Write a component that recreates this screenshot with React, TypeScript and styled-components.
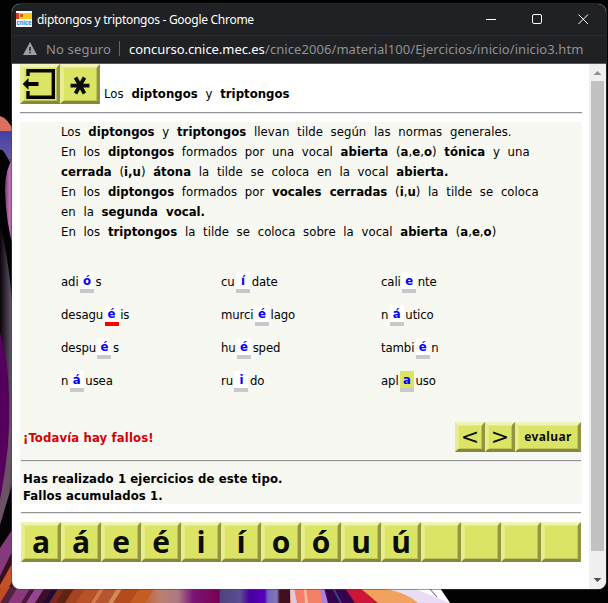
import React from 'react';
import styled, { createGlobalStyle } from 'styled-components';

const GlobalStyle = createGlobalStyle`
  * { box-sizing: border-box; }
  body { margin: 0; background: #000; overflow: hidden; }
`;

const pageFont = '"DejaVu Sans Condensed", "DejaVu Sans", Tahoma, sans-serif';
const chromeFont = '"Noto Sans", "Segoe UI", sans-serif';

const Desktop = styled.div`
  display: grid;
  width: 608px;
  height: 603px;
  overflow: hidden;
  background: #020203;
  > * { grid-area: 1 / 1; }
`;

const Wallpaper = styled.svg`
  display: block;
  width: 608px;
  height: 603px;
`;

const Window = styled.main`
  z-index: 1;
  display: flex;
  flex-direction: column;
  width: 594px;
  height: 585px;
  margin: 4px 0 0 12px;
  border-radius: 8px;
  overflow: hidden;
  background: #fff;
  box-shadow: 0 0 0 1px rgba(70, 70, 70, 0.55);
`;

const TitleBar = styled.header`
  display: flex;
  align-items: center;
  height: 32px;
  padding-left: 4px;
  background: #202124;
  border-bottom: 1px solid #2b2c2f;
  color: #fff;
  font: 12px ${chromeFont};
`;

const Favicon = styled.svg`
  width: 16px;
  height: 16px;
  margin: 0 5px 1px 0;
  overflow: visible;
`;

const WindowTitle = styled.span`
  flex: 1;
  letter-spacing: -0.28px;
  white-space: nowrap;
`;

const WindowControls = styled.svg`
  width: 104px;
  height: 12px;
  margin: 0 16px 1px 0;
`;

const AddressBar = styled.div`
  display: flex;
  align-items: center;
  height: 28px;
  padding: 0 0 2px 11px;
  background: #202124;
  border-bottom: 1px solid #55585c;
  color: #8e9195;
  font: 13px ${chromeFont};
  white-space: nowrap;
`;

const WarningIcon = styled.svg`
  width: 14px;
  height: 13px;
  margin-right: 9px;
`;

const Security = styled.span`
  width: 73px;
  letter-spacing: 0.16px;
`;

const Divider = styled.span`
  width: 1px;
  height: 15px;
  margin-right: 9px;
  background: #65686b;
`;

const Domain = styled.span`
  width: 136px;
  color: #fff;
  letter-spacing: -0.05px;
`;

const UrlPath = styled.span`
  letter-spacing: 0.07px;
`;

const Viewport = styled.div`
  display: flex;
  flex: 1;
  min-height: 0;
`;

const Content = styled.article`
  flex: 1;
  padding: 0 7px 0 8px;
  color: #000;
  font: 13px ${pageFont};
`;

const Heading = styled.div`
  display: flex;
  height: 40px;
  margin-bottom: 8px;
`;

const HeadingText = styled.p`
  margin: 21px 0 0 4px;
  line-height: 18px;
  word-spacing: 4px;
  letter-spacing: 0.03px;
  white-space: nowrap;
`;

const Rule = styled.hr<{ $inset?: boolean }>`
  height: 2px;
  margin: 0 ${p => (p.$inset ? 1 : 0)}px;
  border: 0;
  border-top: 1px solid #929297;
  border-bottom: 1px solid #e8e8e8;
`;

const Panel = styled.section`
  height: 382px;
  margin: 8px 0;
  background: #f7f8f2;
`;

const Rules = styled.div`
  padding-left: 41px;
  line-height: 20px;
  word-spacing: 4px;
  letter-spacing: 0.02px;
  white-space: nowrap;
`;

const RuleLine = styled.p`
  margin: 0;
`;

const Words = styled.div`
  display: grid;
  grid-template-columns: repeat(3, 160px);
  grid-auto-rows: 33px;
  margin: 30px 0 0 41px;
  height: 150px;
`;

const Word = styled.div`
  display: flex;
  line-height: 17px;
  white-space: nowrap;
  letter-spacing: -0.1px;
`;

const Part = styled.span`
  padding-top: 1px;
`;

type SlotState = 'normal' | 'wrong' | 'active';

const Slot = styled.span<{ $state: SlotState }>`
  width: 14px;
  height: 21px;
  margin: 0 1.6px 0 1.4px;
  background: ${p => (p.$state === 'active' ? '#dce465' : '#fff')};
  border-bottom: 4px solid ${p => (p.$state === 'wrong' ? '#f00' : '#c9c9c9')};
  color: #00f;
  font-weight: bold;
  text-align: center;
`;

const ResultBar = styled.div`
  display: flex;
  align-items: center;
  height: 30px;
  margin-bottom: 8px;
  padding: 0 1px 0 3px;
`;

const Message = styled.strong`
  flex: 1;
  color: #d50008;
  letter-spacing: 0.12px;
`;

const Totals = styled.p`
  margin: 8px 0 0 3px;
  font-weight: bold;
  line-height: 17px;
  letter-spacing: 0.1px;
`;

const Key = styled.button<{ $width: number; $height: number }>`
  display: flex;
  justify-content: center;
  align-items: center;
  width: ${p => p.$width}px;
  height: ${p => p.$height}px;
  padding: 0;
  border: 3px solid;
  border-color: #f1f4b9 #92953f #85883a #e8ec93;
  background: #dce465;
  box-shadow: inset 1px 1px 0 #e5eb82, inset -1px -1px 0 #bfc458;
  color: #0c0d06;
`;

const KeyLetter = styled.span`
  font: bold 30px/34px "Open Sans", sans-serif;
`;

const ArrowGlyph = styled.span`
  font: 22px/24px "DejaVu Sans", sans-serif;
`;

const EvaluateLabel = styled.span`
  font: bold 12px/22px "Noto Sans", sans-serif;
  letter-spacing: 0.4px;
`;

const Keyboard = styled.div`
  display: flex;
  margin: 8px 0 0 1px;
`;

const ScrollTrack = styled.div`
  display: flex;
  flex-direction: column;
  align-items: center;
  width: 17px;
  background: #f0f0f0;
`;

const ScrollArrow = styled.svg`
  width: 17px;
  height: 17px;
`;

const Thumb = styled.div`
  width: 13px;
  height: 470px;
  margin-bottom: 20px;
  background: #c1c1c1;
`;

const words: [string, string, string, SlotState?][] = [
  ['adi', 'ó', 's'], ['cu', 'í', 'date'], ['cali', 'e', 'nte'],
  ['desagu', 'é', 'is', 'wrong'], ['murci', 'é', 'lago'], ['n', 'á', 'utico'],
  ['despu', 'é', 's'], ['hu', 'é', 'sped'], ['tambi', 'é', 'n'],
  ['n', 'á', 'usea'], ['ru', 'i', 'do'], ['apl', 'a', 'uso', 'active'],
];

const letters = ['a', 'á', 'e', 'é', 'i', 'í', 'o', 'ó', 'u', 'ú', '', '', '', ''];

// Slanted light streaks along the lower left of the wallpaper: x, width, colour.
const streaks: [number, number, string][] = [
  [-14, 14, '#c54b21'], [0, 8, '#52213e'], [8, 13, '#8a397d'], [21, 5, '#491835'],
  [26, 9, '#98458f'], [35, 8, '#3b1026'], [43, 6, '#220938'], [49, 7, '#7d2921'],
  [56, 9, '#612311'], [65, 11, '#a54422'], [76, 15, '#b95126'], [91, 4, '#d47b48'],
  [95, 13, '#b65631'], [108, 5, '#d28a57'], [113, 17, '#b34b1c'], [130, 14, '#c45d22'],
];

export default function App() {
  return (
    <>
      <GlobalStyle />
      <Desktop>
        <Wallpaper viewBox="0 0 608 603">
          <defs>
            <linearGradient id="blue" x1="0" y1="0" x2="0" y2="1">
              <stop offset="0" stopColor="#4040a5" /><stop offset=".65" stopColor="#6857a3" /><stop offset="1" stopColor="#151015" />
            </linearGradient>
            <linearGradient id="edge"><stop offset="0" stopColor="#090509" /><stop offset="1" stopColor="#74677a" /></linearGradient>
            <linearGradient id="pink"><stop offset="0" stopColor="#713c74" /><stop offset=".5" stopColor="#be70ad" /><stop offset="1" stopColor="#a65b9c" /></linearGradient>
            <linearGradient id="floor" gradientUnits="userSpaceOnUse" x1="140" x2="292" y1="0" y2="0">
              <stop offset="0" stopColor="#c05a26" /><stop offset=".13" stopColor="#bc806d" /><stop offset=".25" stopColor="#ad7882" />
              <stop offset=".35" stopColor="#7b1477" /><stop offset=".52" stopColor="#780052" /><stop offset=".53" stopColor="#4e4480" />
              <stop offset=".66" stopColor="#5d4c91" /><stop offset=".72" stopColor="#4700a1" /><stop offset=".82" stopColor="#5b00bd" />
              <stop offset=".84" stopColor="#7066b9" /><stop offset=".9" stopColor="#8677bd" /><stop offset=".92" stopColor="#41111d" /><stop offset="1" stopColor="#3c101e" />
            </linearGradient>
          </defs>
          <path d="M0 116Q8 118 14 132H0Z" fill="#db7062" />
          <path d="M0 131H14V172Q4 147 0 150Z" fill="url(#blue)" />
          <path d="M0 225Q12 270 14 340V520H0Z" fill="url(#edge)" />
          <path d="M14 157Q5 168 5 190Q6 225 14 249Z" fill="url(#pink)" />
          <path d="M0 333Q10 362 9 420Q8 475 0 510Z" fill="#55005c" />
          <path d="M0 500Q10 450 11 390V440Q11 510 0 545Z" fill="#6b5365" />
          <path d="M14 478V525L0 552V525Z" fill="#050305" />
          <path d="M14 527V548L0 578V548Z" fill="#843b7c" />
          <path d="M14 548V563L0 588V576Z" fill="#371022" />
          <path d="M14 560V580L0 603V585Z" fill="#c45426" />
          <path d="M14 578V591L0 603Z" fill="#461630" />
          <rect x="0" y="588" width="292" height="15" fill="url(#floor)" />
          {streaks.map(([x, w, color]) => (
            <path key={x} d={`M${x + 10} 587H${x + w + 11}L${x + w + 1} 603H${x}Z`} fill={color} />
          ))}
          <path d="M290 588H325V603H290Z" fill="#f47e66" />
          <path d="M290 588H294L297 603H291Z" fill="#d9cce4" />
          <path d="M304 588H306L308 603H305Z" fill="#ffc1a0" />
          <path d="M320 588H325L331 603H322Z" fill="#aa82da" />
          <path d="M324 588H351L359 603H328Z" fill="#36044e" />
          <path d="M333 588L341 603" stroke="#36447d" strokeWidth="2" />
          <path d="M345 588H371L387 603H355Z" fill="#cc1638" />
          <path d="M360 588H385Q410 592 424 603H378Z" fill="#f3a15e" />
          <path d="M378 588H439L450 603H418Q405 591 378 588Z" fill="#e9dcf7" />
          <path d="M413 588H440L450 603Z" fill="#fff" />
          <path d="M429 588L437 597" stroke="#5648b4" />
        </Wallpaper>
        <Window>
          <TitleBar>
            <Favicon viewBox="0 0 16 16">
              <rect width="16" height="16" fill="#fff" />
              <rect y="2" width="16" height="6" fill="#f8c81a" />
              <rect y="2" width="3" height="6" fill="#d83b25" />
              <rect x="4" y="3" width="3" height="3" fill="#c2611c" />
              <text x="0.5" y="13.5" fontSize="6.5" fontWeight="bold" fontFamily="Liberation Sans" fill="#1178c8" textLength="15" lengthAdjust="spacingAndGlyphs">cnice</text>
            </Favicon>
            <WindowTitle>diptongos y triptongos - Google Chrome</WindowTitle>
            <WindowControls viewBox="0 0 104 12" fill="none" stroke="#fff">
              <path d="M0 6.5H10" />
              <rect x="46.5" y="1.5" width="9" height="9" rx="1.5" />
              <path d="M92.5 1.5L102 11M102 1.5L92.5 11" />
            </WindowControls>
          </TitleBar>
          <AddressBar>
            <WarningIcon viewBox="0 0 14 13">
              <path d="M7 0L14 13H0Z" fill="#9aa0a6" />
              <path d="M7 5V8.7M7 9.7V11.3" stroke="#202124" strokeWidth="1.6" />
            </WarningIcon>
            <Security>No seguro</Security>
            <Divider />
            <Domain>concurso.cnice.mec.es</Domain>
            <UrlPath>/cnice2006/material100/Ejercicios/inicio/inicio3.htm</UrlPath>
          </AddressBar>
          <Viewport>
            <Content>
              <Heading>
                <Key $width={40} $height={40} aria-label="Salir">
                  <svg width="34" height="34" viewBox="3 3 34 34" overflow="visible">
                    <path d="M8 12V6.7H33.3V33.3H8V27" fill="none" stroke="#050602" strokeWidth="3.4" />
                    <path d="M2.7 20L8.5 14V18H18.5V22H8.5V25.7Z" fill="#050602" />
                  </svg>
                </Key>
                <Key $width={40} $height={40} aria-label="Asterisco">
                  <svg width="34" height="34" viewBox="3 3 34 34">
                    <path d="M10.5 21.7H29.5M15.5 13.5L24.5 29.5M24.5 13.5L15.5 29.5" stroke="#0c0d06" strokeWidth="3.8" />
                  </svg>
                </Key>
                <HeadingText>Los <b>diptongos</b> y <b>triptongos</b></HeadingText>
              </Heading>
              <Rule />
              <Panel>
                <Rules>
                  <RuleLine>Los <b>diptongos</b> y <b>triptongos</b> llevan tilde según las normas generales.</RuleLine>
                  <RuleLine>En los <b>diptongos</b> formados por una vocal <b>abierta</b> (<b>a</b>,<b>e</b>,<b>o</b>) <b>tónica</b> y una</RuleLine>
                  <RuleLine><b>cerrada</b> (<b>i,u</b>) <b>átona</b> la tilde se coloca en la vocal <b>abierta.</b></RuleLine>
                  <RuleLine>En los <b>diptongos</b> formados por <b>vocales cerradas</b> (<b>i</b>,<b>u</b>) la tilde se coloca</RuleLine>
                  <RuleLine>en la <b>segunda vocal.</b></RuleLine>
                  <RuleLine>En los <b>triptongos</b> la tilde se coloca sobre la vocal <b>abierta</b> (<b>a</b>,<b>e</b>,<b>o</b>)</RuleLine>
                </Rules>
                <Words>
                  {words.map(([before, letter, after, state = 'normal']) => (
                    <Word key={before + letter + after}>
                      <Part>{before}</Part>
                      <Slot $state={state}>{letter}</Slot>
                      <Part>{after}</Part>
                    </Word>
                  ))}
                </Words>
                <ResultBar>
                  <Message>¡Todavía hay fallos!</Message>
                  <Key $width={30} $height={30}><ArrowGlyph>&lt;</ArrowGlyph></Key>
                  <Key $width={30} $height={30}><ArrowGlyph>&gt;</ArrowGlyph></Key>
                  <Key $width={66} $height={30}><EvaluateLabel>evaluar</EvaluateLabel></Key>
                </ResultBar>
                <Rule $inset />
                <Totals>Has realizado 1 ejercicios de este tipo.<br />Fallos acumulados 1.</Totals>
              </Panel>
              <Rule $inset />
              <Keyboard>
                {letters.map((letter, i) => (
                  <Key key={i} $width={40} $height={40}><KeyLetter>{letter}</KeyLetter></Key>
                ))}
              </Keyboard>
            </Content>
            <ScrollTrack>
              <ScrollArrow viewBox="0 0 17 17"><path d="M4.5 11L8.5 7L12.5 11Z" fill="#929292" /></ScrollArrow>
              <Thumb />
              <ScrollArrow viewBox="0 0 17 17"><path d="M4.5 7L8.5 11L12.5 7Z" fill="#505050" /></ScrollArrow>
            </ScrollTrack>
          </Viewport>
        </Window>
      </Desktop>
    </>
  );
}
